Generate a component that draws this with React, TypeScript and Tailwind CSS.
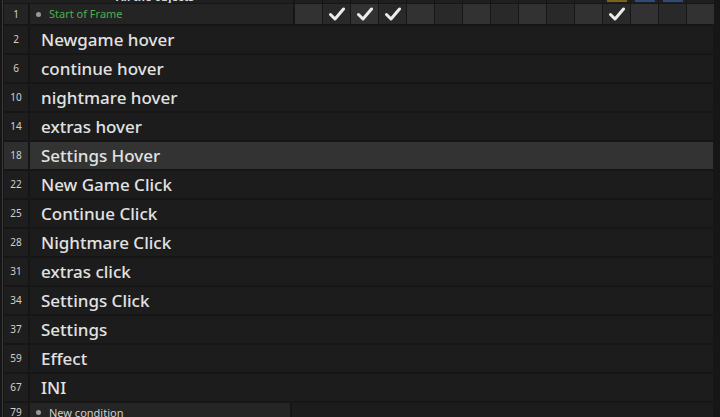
import React from "react";

const groups: { n: string; t: string; hl?: boolean }[] = [
  { n: "2", t: "Newgame hover" },
  { n: "6", t: "continue hover" },
  { n: "10", t: "nightmare hover" },
  { n: "14", t: "extras hover" },
  { n: "18", t: "Settings Hover", hl: true },
  { n: "22", t: "New Game Click" },
  { n: "25", t: "Continue Click" },
  { n: "28", t: "Nightmare Click" },
  { n: "31", t: "extras click" },
  { n: "34", t: "Settings Click" },
  { n: "37", t: "Settings" },
  { n: "59", t: "Effect" },
  { n: "67", t: "INI" },
];

const checks = [false, true, true, true, false, false, false, false, false, false, false, true, false, false, false];

function Check() {
  return (
    <svg width="16" height="14" viewBox="0 0 16 14">
      <path d="M1.5 7.5 L6 12 L14.5 2" fill="none" stroke="#ececec" strokeWidth="3" strokeLinecap="round" strokeLinejoin="round" />
    </svg>
  );
}

export default function App() {
  const headerCells = Array.from({ length: 15 });
  return (
    <div
      className="w-[720px] h-[417px] overflow-hidden bg-[#161616] flex flex-col gap-[1px] relative"
      style={{ fontFamily: "'Noto Sans', 'Open Sans', sans-serif" }}
    >
      <div className="absolute left-[2px] top-0 bottom-0 w-[1px] bg-[#3a3a3a]" />
      {/* header strip */}
      <div className="h-[3px] flex pl-[4px] shrink-0">
        <div className="w-[289px] h-full bg-[#1f1f1f] relative overflow-hidden">
          <div className="absolute left-[112px] top-[-9px] text-[11px] font-bold text-[#d8d8d8] leading-none whitespace-nowrap">
            All the objects
          </div>
        </div>
        <div className="flex gap-[1px] ml-[2px]">
          {headerCells.map((_, i) => (
            <div key={i} className="w-[27px] h-full bg-[#1f1f1f] flex justify-center">
              {i === 11 && <div className="w-[20px] h-[2px] bg-[#7a6418]" />}
              {(i === 12 || i === 13) && <div className="w-[20px] h-[2px] bg-[#2f4a7a]" />}
            </div>
          ))}
        </div>
      </div>
      {/* row 1 */}
      <div className="h-[20px] flex gap-[2px] pl-[4px] shrink-0 mb-[1px]">
        <div className="w-[24px] bg-[#242424] flex items-center justify-center text-[10px] text-[#cfcfcf]">1</div>
        <div className="w-[263px] bg-[#242424] flex items-center pl-[6px] gap-[8px]">
          <div className="w-[5px] h-[5px] rounded-full bg-[#9a9a9a]" />
          <span className="text-[11px] text-[#4caf50]">Start of Frame</span>
        </div>
        <div className="flex gap-[1px]">
          {checks.map((c, i) => (
            <div
              key={i}
              className={"w-[27px] flex items-center justify-center " + (i % 2 === 0 ? "bg-[#323232]" : "bg-[#292929]")}
            >
              {c && <Check />}
            </div>
          ))}
        </div>
      </div>
      {/* groups */}
      <div className="flex flex-col gap-[2px] pr-[7px]">
        {groups.map((g) => (
          <div key={g.n} className="h-[27px] flex gap-[2px] pl-[4px]">
            <div
              className={
                "w-[24px] flex items-center justify-center text-[10px] text-[#d0d0d0] " +
                (g.hl ? "bg-[#2e2e2e]" : "bg-[#1e1e1e]")
              }
            >
              {g.n}
            </div>
            <div
              className={
                "flex-1 flex items-center pl-[11px] text-[17px] font-medium text-[#e2e2e2] " +
                (g.hl ? "bg-[#333333]" : "bg-[#1c1c1c]")
              }
            >
              {g.t}
            </div>
          </div>
        ))}
        <div className="h-[20px] flex gap-[2px] pl-[4px]">
          <div className="w-[24px] bg-[#1e1e1e] flex items-start pt-[2px] justify-center text-[10px] text-[#cfcfcf]">79</div>
          <div className="w-[260px] bg-[#252525] flex items-start pt-[2px] pl-[6px] gap-[8px]">
            <div className="w-[5px] h-[5px] rounded-full bg-[#9a9a9a] mt-[5px]" />
            <span className="text-[11px] text-[#cfcfcf]">New condition</span>
          </div>
          <div className="flex-1 bg-[#1c1c1c]" />
        </div>
      </div>
    </div>
  );
}
